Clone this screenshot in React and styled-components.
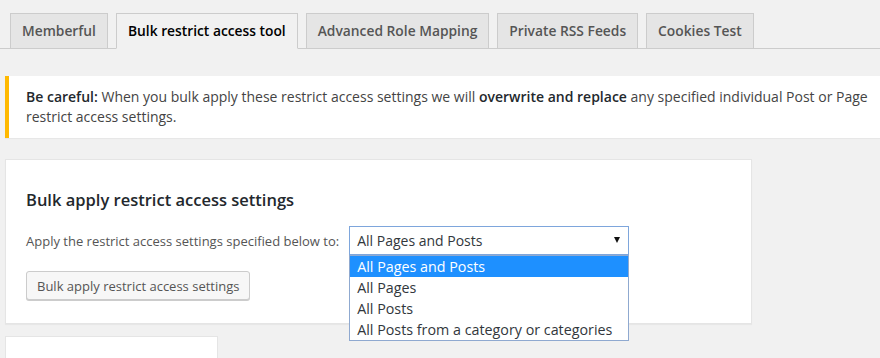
import React from 'react'
import styled, { createGlobalStyle } from 'styled-components'

const Global = createGlobalStyle`
  html, body {
    margin: 0;
    padding: 0;
    background: #f1f1f1;
  }
  body {
    font-family: 'Open Sans', 'Noto Sans', sans-serif;
    color: #444;
    font-size: 14px;
  }
`

const Page = styled.div`
  padding: 13px 0 0 0;
  overflow: hidden;
  height: 358px;
  box-sizing: border-box;
`

const TabBar = styled.nav`
  display: flex;
  gap: 8px;
  padding-left: 10px;
  border-bottom: 1px solid #ccc;
`

const Tab = styled.a`
  display: block;
  padding: 5px 11px;
  line-height: 24px;
  font-size: 13.8px;
  font-weight: 600;
  color: ${p => (p.$active ? '#000' : '#555')};
  background: ${p => (p.$active ? '#f1f1f1' : '#e5e5e5')};
  border: 1px solid #ccc;
  border-bottom: 1px solid ${p => (p.$active ? '#f1f1f1' : '#ccc')};
  margin-bottom: -1px;
  text-decoration: none;
  white-space: nowrap;
`

const Notice = styled.div`
  margin: 27px 0 0 5px;
  background: #fff;
  border-left: 4px solid #ffb900;
  box-shadow: 0 1px 1px rgba(0, 0, 0, 0.04);
  padding: 11px 12px 11px 17px;
  line-height: 20px;
  font-size: 14px;
  color: #444;

  strong {
    color: #23282d;
    font-weight: 600;
  }
`

const Card = styled.section`
  margin: 21px 0 0 5px;
  width: 747px;
  box-sizing: border-box;
  background: #fff;
  border: 1px solid #e5e5e5;
  box-shadow: 0 1px 1px rgba(0, 0, 0, 0.04);
  padding: 28px 20px 23px;
`

const Heading = styled.h2`
  margin: 0 0 14px;
  font-size: 16.5px;
  font-weight: 600;
  line-height: 24px;
  color: #23282d;
`

const Row = styled.div`
  display: flex;
  align-items: center;
  gap: 10px;
  margin-bottom: 16px;
`

const Label = styled.label`
  font-size: 13px;
  color: #555;
`

const SelectWrap = styled.div`
  position: relative;
  width: 280px;
`

const SelectBox = styled.div`
  height: 29px;
  box-sizing: border-box;
  border: 1px solid #7ea6dc;
  background: #fff;
  display: flex;
  align-items: center;
  justify-content: space-between;
  padding: 0 8px 0 7px;
  font-size: 14px;
  color: #32373c;
`

const Arrow = styled.span`
  width: 0;
  height: 0;
  border-left: 3.5px solid transparent;
  border-right: 3.5px solid transparent;
  border-top: 6px solid #111;
  margin-top: -2px;
`

const Options = styled.ul`
  position: absolute;
  top: 29px;
  left: 0;
  width: 100%;
  box-sizing: border-box;
  margin: 0;
  padding: 0;
  list-style: none;
  background: #fff;
  border: 1px solid #8fa9d0;
  z-index: 2;
`

const Option = styled.li`
  height: 21px;
  line-height: 21px;
  padding-left: 7px;
  font-size: 14.3px;
  color: ${p => (p.$selected ? '#fff' : '#32373c')};
  background: ${p => (p.$selected ? '#1e90ff' : 'transparent')};
  white-space: nowrap;
`

const Button = styled.button`
  font-family: inherit;
  font-size: 13px;
  color: #555;
  background: #f7f7f7;
  border: 1px solid #ccc;
  border-radius: 3px;
  box-shadow: 0 1px 0 #ccc;
  height: 29px;
  padding: 0 10px;
  cursor: pointer;
`

const SubCard = styled.div`
  margin: 12px 0 0 5px;
  width: 211px;
  height: 40px;
  background: #fff;
  border: 1px solid #e5e5e5;
`

const tabs = ['Memberful', 'Bulk restrict access tool', 'Advanced Role Mapping', 'Private RSS Feeds', 'Cookies Test']
const choices = ['All Pages and Posts', 'All Pages', 'All Posts', 'All Posts from a category or categories']

export default function App() {
  return (
    <Page>
      <Global />
      <TabBar>
        {tabs.map((t, i) => (
          <Tab key={t} $active={i === 1}>{t}</Tab>
        ))}
      </TabBar>
      <Notice>
        <strong>Be careful:</strong> When you bulk apply these restrict access settings we will{' '}
        <strong>overwrite and replace</strong> any specified individual Post or Page restrict access settings.
      </Notice>
      <Card>
        <Heading>Bulk apply restrict access settings</Heading>
        <Row>
          <Label>Apply the restrict access settings specified below to:</Label>
          <SelectWrap>
            <SelectBox>
              <span>All Pages and Posts</span>
              <Arrow />
            </SelectBox>
            <Options>
              {choices.map((c, i) => (
                <Option key={c} $selected={i === 0}>{c}</Option>
              ))}
            </Options>
          </SelectWrap>
        </Row>
        <Button>Bulk apply restrict access settings</Button>
      </Card>
      <SubCard />
    </Page>
  )
}
